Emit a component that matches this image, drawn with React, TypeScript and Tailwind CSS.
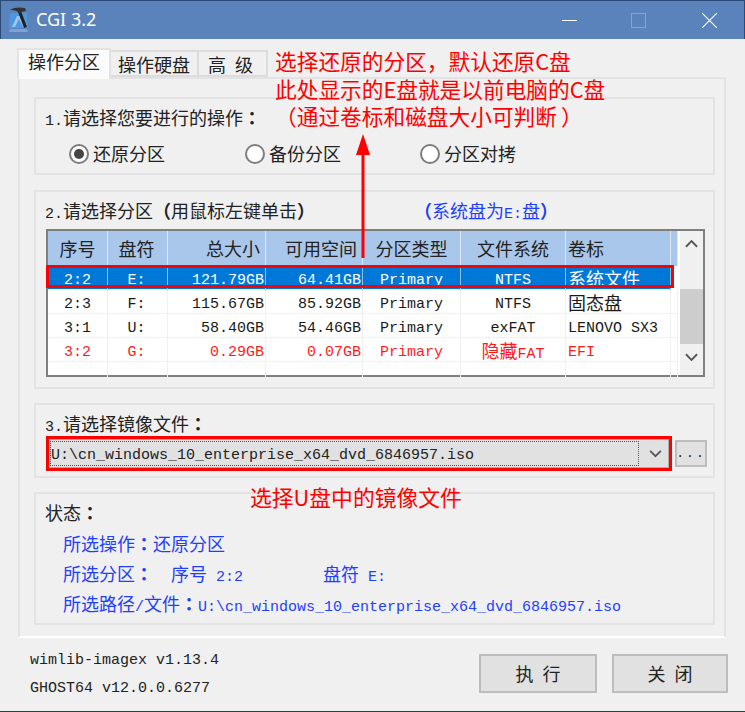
import type { ReactNode } from "react";

// latin text is 9px wide per char (15px mono), CJK is 18px
function Txt({ s }: { s: string }) {
  const parts = s.split(/([\u0000-\u00ff]+|[：（）])/).filter(Boolean);
  return (
    <>
      {parts.map((p, i) =>
        /^[\u0000-\u00ff]/.test(p) ? (
          <span key={i} className="font-['Liberation_Mono',monospace] text-[15px] whitespace-pre">
            {p}
          </span>
        ) : /^[：（）]/.test(p) ? (
          <span key={i} className="font-['Noto_Sans_CJK_TC',sans-serif] text-[18px] font-bold whitespace-pre">
            {p}
          </span>
        ) : (
          <span key={i} className="font-['Noto_Sans_CJK_SC',sans-serif] text-[18px] whitespace-pre">
            {p}
          </span>
        ),
      )}
    </>
  );
}

function Group({ className, children }: { className: string; children: ReactNode }) {
  return <div className={`relative border-2 border-[#e3e3e3] ${className}`}>{children}</div>;
}

function Heading({ children }: { children: ReactNode }) {
  return <div className="h-[30px] whitespace-nowrap pl-[9px] pt-[6px] leading-[24px] text-[#222]">{children}</div>;
}

function Radio({ on, label, className }: { on?: boolean; label: string; className: string }) {
  return (
    <div className={`flex items-center gap-[4px] ${className}`}>
      <span className="flex h-[20px] w-[20px] items-center justify-center rounded-full border-2 border-[#7d7d7d] bg-white">
        {on && <span className="h-[10px] w-[10px] rounded-full bg-[#444]" />}
      </span>
      <span className="leading-[24px] text-[#222]">
        <Txt s={label} />
      </span>
    </div>
  );
}

const rows = [
  ["2:2", "E:", "121.79GB", "64.41GB", "Primary", "NTFS", "系统文件"],
  ["2:3", "F:", "115.67GB", "85.92GB", "Primary", "NTFS", "固态盘"],
  ["3:1", "U:", "58.40GB", "54.46GB", "Primary", "exFAT", "LENOVO SX3"],
  ["3:2", "G:", "0.29GB", "0.07GB", "Primary", "隐藏FAT", "EFI"],
  ["", "", "", "", "", "", ""],
];

const cols = "grid grid-cols-[60px_60px_98px_97px_98px_105px_105px_7px]";
const align = ["text-center", "text-center pr-[2px]", "text-right pr-[1px]", "text-right pr-[1px]", "text-center", "text-center", "text-left pl-[2px]"];

function Chevron({ up, className }: { up?: boolean; className: string }) {
  return (
    <svg viewBox="0 0 14 9" className={className} fill="none" stroke="currentColor" strokeWidth="2">
      <path d={up ? "M1 8 7 2l6 6" : "M1 1l6 6 6-6"} />
    </svg>
  );
}

function PartitionTable() {
  return (
    <div className="relative ml-[10px] mt-[7px] flex h-[148px] w-[659px] border-2 border-[#7f7f7f] bg-white">
      <div className="w-[630px]">
        <div className={`${cols} h-[35px] bg-[#a9c7ea] text-[#222]`}>
          {["序号", "盘符", "总大小", "可用空间", "分区类型", "文件系统", "卷标", ""].map((h, i) => (
            <div
              key={i}
              className={`border-r border-[#dce8f6] leading-[35px] ${
                i === 2 || i === 3 ? "pr-[5px] text-right" : i === 6 ? "pl-[2px] text-left" : i === 1 ? "pr-[2px] text-center" : "text-center"
              }`}
            >
              <Txt s={h} />
            </div>
          ))}
        </div>
        {rows.map((r, ri) => (
          <div
            key={ri}
            className={`${cols} h-[24px] border-b border-[#f0f0f0] ${
              ri === 0 ? "bg-[#0078d7] text-white" : ri === 3 ? "text-[#ff1a1a]" : "text-[#1a1a1a]"
            }`}
          >
            {r.map((c, i) => (
              <div
                key={i}
                className={`whitespace-nowrap border-r leading-[24px] ${align[i]} ${
                  ri === 0 ? "border-[#8fc0ea]" : "border-[#f0f0f0]"
                }`}
              >
                <Txt s={c} />
              </div>
            ))}
            <div className={ri === 0 ? "bg-white" : "border-r border-[#f0f0f0]"} />
          </div>
        ))}
      </div>
      <div className="ml-[2px] flex w-[23px] flex-col items-center bg-[#f0f0f0] text-[#555]">
        <Chevron up className="mt-[8px] h-[9px] w-[13px]" />
        <div className="mt-[41px] h-[55px] w-full bg-[#cdcdcd]" />
        <Chevron className="mt-[9px] h-[9px] w-[13px]" />
      </div>
      {/* red highlight over the selected row */}
      <div className="absolute left-[-2px] top-[34px] h-[23px] w-[628px] border-[3px] border-[#ff0000]" />
    </div>
  );
}

function ImagePicker() {
  return (
    <div className="ml-[10px] mt-[1px] flex items-center">
      <div className="h-[35px] w-[626px] border-[3px] border-[#ff0000] bg-[#e1e1e1]">
        <div className="flex h-full items-center border border-[#adadad]">
          <div className="flex h-[25px] w-[589px] items-center border border-dotted border-[#555] pt-[5px] text-[#222]">
            <Txt s="U:\cn_windows_10_enterprise_x64_dvd_6846957.iso" />
          </div>
          <Chevron className="ml-[10px] h-[8px] w-[13px] text-[#555]" />
        </div>
      </div>
      <div className="ml-[3px] flex h-[27px] w-[32px] items-center justify-center border-2 border-[#bdbdbd] bg-[#e1e1e1] font-['Liberation_Mono',monospace] text-[13px] tracking-[2px] text-[#222]">
        ...
      </div>
    </div>
  );
}

const lineBlue = "h-[30px] leading-[30px] pl-[27px] text-[#1f3fff]";

export default function App() {
  return (
    <div className="relative flex h-[712px] w-[745px] flex-col overflow-hidden border-b border-[#1f3a66] bg-[#f0f0f0]">
      {/* title bar */}
      <div className="flex h-[39px] shrink-0 items-center border-x border-t border-[#2c4a78] bg-[#5a83bb] pl-[7px]">
        <svg viewBox="0 0 22 28" className="h-[28px] w-[22px]">
          <path d="M2 7h17l1 15H1z" fill="#4f96e2" />
          <path d="M4 21 9 10h3l5 11h-2l-4-8-4 8z" fill="#9cc6ef" />
          <path d="M2 23h17l1 3H1z" fill="#7ea3d2" />
          <path d="M10 6l3-1 6 16-3 1z" fill="#222" />
          <path d="M2 4C6 1 12 1 17 2l1 3-5 1-1 2-2-2C7 4 4 4 2 4z" fill="#333" />
        </svg>
        <span className="mb-[2px] ml-[6px] font-['Noto_Sans',sans-serif] text-[18px] text-white">CGI 3.2</span>
        <div className="ml-auto flex items-center pr-[27px]">
          <div className="h-px w-[15px] bg-white" />
          <div className="ml-[54px] h-[15px] w-[15px] border border-[#86a4cd]" />
          <svg viewBox="0 0 15 15" className="ml-[56px] h-[15px] w-[15px]" stroke="#fff" strokeWidth="1.1">
            <path d="M0 0l15 15M15 0 0 15" />
          </svg>
        </div>
      </div>

      {/* tabs */}
      <div className="ml-[17px] mt-[10px] flex h-[28px] items-end text-[#222]">
        <div className="relative z-10 -mb-[2px] h-[31px] w-[94px] border-x-2 border-t-2 border-[#e3e3e3] bg-[#fbfbfb] text-center leading-[22px]">
          <Txt s="操作分区" />
        </div>
        <div className="h-[27px] w-[88px] border-2 border-l-0 border-[#dcdcdc] text-center leading-[24px]">
          <Txt s="操作硬盘" />
        </div>
        <div className="h-[27px] w-[69px] border-2 border-l-0 border-[#dcdcdc] pr-[4px] text-center leading-[24px]">
          <Txt s="高 级" />
        </div>
      </div>

      {/* panel */}
      <div className="ml-[18px] flex h-[561px] w-[708px] flex-col border-2 border-[#e3e3e3] border-b-white pl-[14px] pt-[18px]">
        <Group className="h-[78px] w-[681px]">
          <Heading>
            <Txt s="1.请选择您要进行的操作：" />
          </Heading>
          <div className="mt-[12px] flex">
            <Radio on label="还原分区" className="ml-[33px] w-[176px]" />
            <Radio label="备份分区" className="w-[175px]" />
            <Radio label="分区对拷" className="" />
          </div>
        </Group>

        <Group className="mt-[15px] h-[199px] w-[681px]">
          <Heading>
            <Txt s="2.请选择分区（用鼠标左键单击）" />
            <span className="ml-[108px] text-[#1f3fff]">
              <Txt s="（系统盘为E:盘）" />
            </span>
          </Heading>
          <PartitionTable />
        </Group>

        <Group className="mt-[14px] h-[75px] w-[681px]">
          <Heading>
            <Txt s="3.请选择镜像文件：" />
          </Heading>
          <ImagePicker />
        </Group>

        <Group className="mt-[14px] h-[133px] w-[681px]">
          <Heading>
            <Txt s="状态：" />
          </Heading>
          <div className="pt-[4px]">
            <div className={lineBlue}>
              <Txt s="所选操作：还原分区" />
            </div>
            <div className={lineBlue}>
              <Txt s="所选分区：  序号 2:2" />
              <span className="ml-[80px]">
                <Txt s="盘符 E:" />
              </span>
            </div>
            <div className={lineBlue}>
              <Txt s="所选路径/文件：U:\cn_windows_10_enterprise_x64_dvd_6846957.iso" />
            </div>
          </div>
        </Group>
      </div>

      {/* footer */}
      <div className="mt-[16px] flex pl-[30px] pr-[17px]">
        <div className="-mt-[7px] flex flex-col font-['Liberation_Mono',monospace] text-[15px] leading-[28px] text-[#222]">
          <span>wimlib-imagex v1.13.4</span>
          <span>GHOST64 v12.0.0.6277</span>
        </div>
        <div className="ml-auto flex gap-[15px]">
          <div className="flex h-[39px] w-[118px] items-center justify-center border-2 border-[#bdbdbd] bg-[#e1e1e1] text-[#222]">
            <Txt s="执 行" />
          </div>
          <div className="flex h-[39px] w-[116px] items-center justify-center border-2 border-[#bdbdbd] bg-[#e1e1e1] text-[#222]">
            <Txt s="关 闭" />
          </div>
        </div>
      </div>

      {/* red annotations over the dialog */}
      <div className="absolute left-[275px] top-[47px] font-['Noto_Sans_CJK_SC',sans-serif] text-[21.7px] leading-[27.5px] text-[#ff0000]">
        <div>选择还原的分区，默认还原C盘</div>
        <div>此处显示的E盘就是以前电脑的C盘</div>
        <div>
          （通过卷标和磁盘大小可判断<span className="ml-[4px]">）</span>
        </div>
      </div>
      <svg viewBox="0 0 16 136" className="absolute left-[355px] top-[134px] h-[136px] w-[16px]">
        <path d="M8 0 15 21H1z" fill="#ff0000" />
        <path d="M8 18v106" stroke="#ff0000" strokeWidth="3" />
      </svg>
      <div className="absolute left-[250px] top-[482px] font-['Noto_Sans_CJK_SC',sans-serif] text-[21.8px] leading-[30px] text-[#ff0000]">
        选择U盘中的镜像文件
      </div>
    </div>
  );
}
